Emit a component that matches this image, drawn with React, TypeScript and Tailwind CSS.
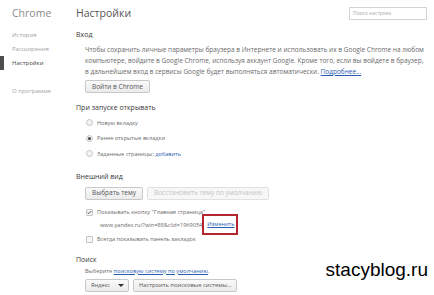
import { Check } from "lucide-react";

const nav = ["История", "Расширения", "Настройки"];

function Btn({ children, off, small }: { children: React.ReactNode; off?: boolean; small?: boolean }) {
  return (
    <span
      className={
        "inline-flex h-[13px] items-center rounded-[2px] border " +
        (small ? "px-[5px] text-[5.8px] " : "px-[6px] text-[6.5px] ") +
        (off
          ? "border-[#e0e0e0] bg-[#f7f7f7] text-[#c4c4c4]"
          : "border-[#c8c8c8] bg-gradient-to-b from-[#fafafa] to-[#ebebeb] text-[#555]")
      }
    >
      {children}
    </span>
  );
}

function Radio({ on, children }: { on?: boolean; children: React.ReactNode }) {
  return (
    <div className="flex h-[15.5px] items-center pl-[10px]">
      <span className="flex h-[7px] w-[7px] items-center justify-center rounded-full border border-[#c4c4c4] bg-[#f4f4f4]">
        {on && <span className="h-[3px] w-[3px] rounded-full bg-[#444]" />}
      </span>
      <span className="ml-[4px]">{children}</span>
    </div>
  );
}

function Box({ on, children }: { on?: boolean; children: React.ReactNode }) {
  return (
    <div className="flex h-[13px] items-center pl-[10px]">
      <span className="flex h-[7px] w-[7px] items-center justify-center rounded-[1px] border border-[#c4c4c4] bg-[#f6f6f6]">
        {on && <Check size={7} strokeWidth={4} color="#333" />}
      </span>
      <span className="ml-[4px]">{children}</span>
    </div>
  );
}

function H({ children, className }: { children: React.ReactNode; className: string }) {
  return (
    <div className={"flex h-[11px] items-center text-[7px] font-medium text-[#383838] " + className}>{children}</div>
  );
}

export default function App() {
  return (
    <div className="relative flex h-[295px] w-[434px] overflow-hidden bg-white font-['Open_Sans',sans-serif] text-[5.6px] text-[#6a6a6a]">
      <aside className="w-[76px] shrink-0">
        <div className="flex h-[27px] items-center pl-[12px] text-[10.5px] text-[#8a8a8a]">Chrome</div>
        <div className="mt-[1px] flex flex-col text-[6px]">
          {nav.map((n) => (
            <div
              key={n}
              className={
                "flex h-[14px] items-center border-l-[4px] pl-[8px] " +
                (n === "Настройки" ? "border-[#4e4e4e] text-[#444]" : "border-transparent text-[#a4a4a4]")
              }
            >
              {n}
            </div>
          ))}
          <div className="mt-[14px] flex h-[14px] items-center pl-[12px] text-[#a4a4a4]">О программе</div>
        </div>
      </aside>

      <main className="flex-1 pr-[7px]">
        <div className="flex h-[27px] items-center justify-between">
          <span className="text-[10.5px] text-[#555]">Настройки</span>
          <span className="flex h-[13px] w-[78px] items-center border border-[#d4d4d4] pl-[3px] text-[5px] text-[#aaa]">
            Поиск настроек
          </span>
        </div>

        <H className="mt-[3px]">Вход</H>
        <div className="mt-[3px] pl-[9px] text-[6.5px] leading-[11px]">
          <p>Чтобы сохранить личные параметры браузера в Интернете и использовать их в Google Chrome на любом</p>
          <p>компьютере, войдите в Google Chrome, используя аккаунт Google. Кроме того, если вы войдете в браузер,</p>
          <p>
            в дальнейшем вход в сервисы Google будет выполняться автоматически.{" "}
            <span className="text-[#2a5db0] underline">Подробнее...</span>
          </p>
        </div>
        <div className="mt-[3px] pl-[9px]">
          <Btn>Войти в Chrome</Btn>
        </div>

        <H className="mt-[10px]">При запуске открывать</H>
        <div className="mt-[1px]">
          <Radio>Новую вкладку</Radio>
          <Radio on>Ранее открытые вкладки</Radio>
          <Radio>
            Заданные страницы: <span className="text-[#2a5db0]">добавить</span>
          </Radio>
        </div>

        <H className="mt-[10px]">Внешний вид</H>
        <div className="mt-[4px] flex gap-[4px] pl-[9px]">
          <Btn>Выбрать тему</Btn>
          <Btn off>Восстановить тему по умолчанию</Btn>
        </div>
        <div className="mt-[6px]">
          <Box on>Показывать кнопку "Главная страница"</Box>
          <div className="flex h-[14px] items-center pl-[24px]">
            <span>www.yandex.ru/?win=88&amp;clid=1969054</span>
            <span className="relative -top-[1px] inline-flex h-[21px] w-[36px] items-center border-2 border-[#b3262d] pl-[3px]">
              <span className="text-[#2a5db0] underline">Изменить</span>
            </span>
          </div>
          <Box>Всегда показывать панель закладок</Box>
        </div>

        <H className="mt-[9px]">Поиск</H>
        <div className="flex h-[11px] items-center pl-[9px]">
          Выберите&nbsp;<span className="text-[#2a5db0] underline">поисковую систему по умолчанию</span>.
        </div>
        <div className="mt-[2px] flex gap-[4px] pl-[9px]">
          <span className="flex h-[13px] w-[44px] items-center justify-between rounded-[2px] border border-[#c8c8c8] bg-gradient-to-b from-[#fafafa] to-[#ebebeb] pl-[5px] pr-[4px] text-[#555]">
            Яндекс
            <span className="h-0 w-0 border-x-[3px] border-t-[3px] border-x-transparent border-t-[#333]" />
          </span>
          <Btn small>Настроить поисковые системы...</Btn>
        </div>
      </main>

      <span className="absolute bottom-[11px] right-[6px] font-['Liberation_Sans',sans-serif] text-[19px] text-black">
        stacyblog.ru
      </span>
    </div>
  );
}
